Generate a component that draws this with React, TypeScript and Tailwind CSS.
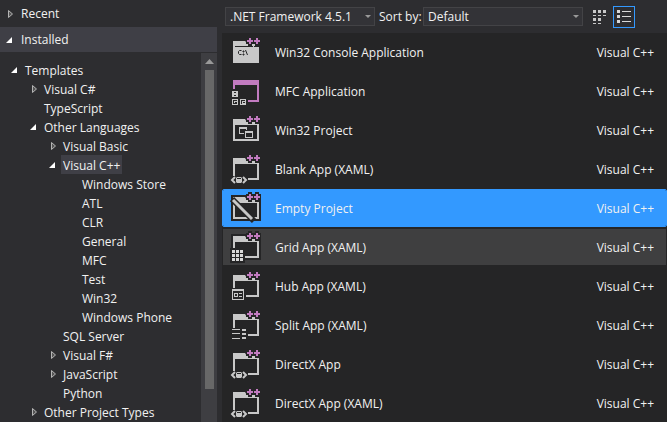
import { useState, type ReactNode } from "react";

type TreeItem = { label: string; level: number; state?: "open" | "closed" };

const TREE: TreeItem[] = [
  { label: "Templates", level: 0, state: "open" },
  { label: "Visual C#", level: 1, state: "closed" },
  { label: "TypeScript", level: 1 },
  { label: "Other Languages", level: 1, state: "open" },
  { label: "Visual Basic", level: 2, state: "closed" },
  { label: "Visual C++", level: 2, state: "open" },
  { label: "Windows Store", level: 3 },
  { label: "ATL", level: 3 },
  { label: "CLR", level: 3 },
  { label: "General", level: 3 },
  { label: "MFC", level: 3 },
  { label: "Test", level: 3 },
  { label: "Win32", level: 3 },
  { label: "Windows Phone", level: 3 },
  { label: "SQL Server", level: 2 },
  { label: "Visual F#", level: 2, state: "closed" },
  { label: "JavaScript", level: 2, state: "closed" },
  { label: "Python", level: 2 },
  { label: "Other Project Types", level: 1, state: "closed" },
];

const INDENT = ["pl-[9px]", "pl-[28px]", "pl-[47px]", "pl-[66px]"];

type IconKind = "console" | "mfc" | "win32" | "xaml" | "empty" | "grid" | "hub" | "split";

const PROJECTS: { name: string; icon: IconKind }[] = [
  { name: "Win32 Console Application", icon: "console" },
  { name: "MFC Application", icon: "mfc" },
  { name: "Win32 Project", icon: "win32" },
  { name: "Blank App (XAML)", icon: "xaml" },
  { name: "Empty Project", icon: "empty" },
  { name: "Grid App (XAML)", icon: "grid" },
  { name: "Hub App (XAML)", icon: "hub" },
  { name: "Split App (XAML)", icon: "split" },
  { name: "DirectX App", icon: "xaml" },
  { name: "DirectX App (XAML)", icon: "xaml" },
];

function Twisty({ state }: { state?: "open" | "closed" }) {
  return (
    <svg className="size-3 shrink-0" viewBox="0 0 12 12" aria-hidden="true">
      {state === "open" && <path d="M8 3v6H2z" fill="#fff" />}
      {state === "closed" && <path d="M4.5 2.5v7L8.5 6z" fill="#555" stroke="#b4b4b4" />}
    </svg>
  );
}

function Folder() {
  return (
    <>
      <path d="M1 4h15v3h15v23H1z" fill="#252526" />
      <path d="M3 6h12l2 3h12v19H3zM5 12v14h22V12z" fill="#c8c8c8" fillRule="evenodd" />
    </>
  );
}

function Pluses() {
  return (
    <>
      <path d="M18 1h4v2h3V1h4v2h2v6h-2v2h-4V9h-3v2h-4V9h-2V3h2z" fill="#252526" />
      <path d="M19 3h2v2h2v2h-2v2h-2V7h-2V5h2zM26 3h2v2h2v2h-2v2h-2V7h-2V5h2z" fill="#c27bc0" />
      <path d="M23 9h1v3h-1z" fill="#c8c8c8" />
    </>
  );
}

const DETAILS: Record<IconKind, ReactNode> = {
  console: (
    <>
      <path d="M3 6h12l2 3h12v19H3z" fill="#c8c8c8" />
      <path d="M5 11h24v1H5z" fill="#252526" />
      <path
        d="M11.5 15.5h-2l-1 1v2l1 1h2M13 16h1v1h-1zM13 19h1v1h-1zM15.5 15l2 5"
        fill="none"
        stroke="#252526"
      />
    </>
  ),
  mfc: (
    <>
      <path d="M3 6h26v22H18v-2h9V11H5v4H3z" fill="#c27bc0" />
      <path d="M2 17h6v6H2zM2 25h6v6H2zM10 25h6v6h-6z" fill="#c8c8c8" />
      <path d="M3 18h4v4H3zM3 26h4v4H3zM11 26h4v4h-4z" fill="#252526" />
      <path
        d="M3 18h1v1h2v-1h1v4H6v-1H4v1H3zM4 27h3v1H5v1H4zM12 27h3v1h-2v1h2v1h-3z"
        fill="#c8c8c8"
      />
    </>
  ),
  win32: (
    <>
      <path d="M9 14h8v7H9z" fill="#c8c8c8" />
      <path d="M10 16h6v4h-6zM14 17h9v8h-9z" fill="#252526" />
      <path d="M15 18h8v7h-8z" fill="#c8c8c8" />
      <path d="M16 20h6v4h-6z" fill="#252526" />
    </>
  ),
  xaml: (
    <>
      <path d="M1 24h17v8H1z" fill="#252526" />
      <path
        d="M5 25l-3 3 3 3M13 25l3 3-3 3"
        fill="none"
        stroke="#c8c8c8"
        strokeWidth="2"
      />
      <path d="M7 25h4l1 1v4l-1 1H7l-1-1v-4z" fill="#c8c8c8" />
      <path d="M7 26h4v1H7z" fill="#252526" />
    </>
  ),
  empty: (
    <>
      <path d="M2 8L24 30" stroke="#252526" strokeWidth="6" />
      <path d="M3 9L22 28" stroke="#c8c8c8" strokeWidth="3" />
    </>
  ),
  grid: (
    <>
      <path d="M0 18h15v15H0z" fill="#252526" />
      <path
        d="M2 20h3v3H2zM6 20h3v3H6zM10 20h3v3h-3zM2 24h3v3H2zM6 24h3v3H6zM10 24h3v3h-3zM2 28h3v3H2zM6 28h3v3H6zM10 28h3v3h-3z"
        fill="#d8d8d8"
      />
    </>
  ),
  hub: (
    <>
      <path d="M1 19h15v13H1z" fill="#252526" />
      <path d="M2 20h12v11H2zM3 22v8h10v-8z" fill="#c8c8c8" fillRule="evenodd" />
      <path d="M4 24h4v4H4zM5 25v2h2v-2z" fill="#c8c8c8" fillRule="evenodd" />
      <path d="M9 24h3v1H9zM9 27h3v1H9z" fill="#c8c8c8" />
    </>
  ),
  split: (
    <>
      <path d="M1 20h17v12H1z" fill="#252526" />
      <path
        d="M2 21h8v1H2zM2 25h8v1H2zM2 30h8v1H2zM12 21h4v2h-4zM12 25h4v2h-4zM12 29h4v2h-4z"
        fill="#c8c8c8"
      />
    </>
  ),
};

function ProjectIcon({ kind }: { kind: IconKind }) {
  return (
    <svg className="size-8 shrink-0" viewBox="0 1 32 32" aria-hidden="true">
      {kind !== "mfc" && <Folder />}
      {DETAILS[kind]}
      {kind !== "mfc" && <Pluses />}
    </svg>
  );
}

function Picker({ id, options, className }: { id: string; options: string[]; className: string }) {
  return (
    <div className={`relative ${className}`}>
      <select
        id={id}
        aria-label={id === "framework" ? "Target framework" : undefined}
        className="block h-[19px] w-full appearance-none border border-[#434346] bg-[#333337] pl-1 text-xs leading-4 text-[#f1f1f1]"
      >
        {options.map((o) => (
          <option key={o}>{o}</option>
        ))}
      </select>
      <svg className="pointer-events-none absolute top-2 right-1 h-1 w-[6px]" viewBox="0 0 6 4" aria-hidden="true">
        <path d="M0 0h6L3 3z" fill="#999" />
      </svg>
    </div>
  );
}

export default function App() {
  const [node, setNode] = useState("Visual C++");
  const [project, setProject] = useState("Empty Project");

  return (
    <div className="flex h-screen overflow-hidden bg-[#2d2d30] font-['Open_Sans','Noto_Sans',sans-serif] text-xs text-[#f1f1f1]">
      <aside className="mr-[5px] flex w-[217px] shrink-0 flex-col">
        <button className="flex h-[27px] shrink-0 items-center gap-[5px] pl-1 text-left">
          <Twisty state="closed" />
          Recent
        </button>
        <button className="flex h-[25px] shrink-0 items-center gap-[5px] bg-[#3f3f46] pl-1 text-left">
          <Twisty state="open" />
          Installed
        </button>
        <div className="mt-px flex min-h-0 flex-1">
          <ul className="min-w-0 flex-1 overflow-hidden pt-[7px]">
            {TREE.map((t) => (
              <li key={t.label}>
                <button
                  onClick={() => setNode(t.label)}
                  className={`flex h-[19px] w-full items-center gap-[2px] text-left whitespace-nowrap ${INDENT[t.level]}`}
                >
                  <Twisty state={t.state} />
                  <span className={`h-[19px] px-[2px] pt-px leading-[19px] ${t.label === node ? "bg-[#3f3f46]" : ""}`}>
                    {t.label}
                  </span>
                </button>
              </li>
            ))}
          </ul>
          <div className="flex w-4 flex-col items-center bg-[#3e3e42] pt-[6px]">
            <svg className="h-[5px] w-[9px] shrink-0" viewBox="0 0 9 5" aria-hidden="true">
              <path d="M4.500 0L9 5H0z" fill="#999" />
            </svg>
            <div className="mt-[6px] mb-[33px] w-[9px] flex-1 bg-[#686868]" />
          </div>
        </div>
      </aside>

      <main className="flex min-w-0 flex-1 flex-col">
        <div className="flex h-[33px] shrink-0 items-center pl-[3px]">
          <Picker id="framework" options={[".NET Framework 4.5.1"]} className="w-[150px]" />
          <label htmlFor="sort" className="w-12 shrink-0 pl-1 whitespace-nowrap">
            Sort by:
          </label>
          <Picker id="sort" options={["Default"]} className="w-[160px]" />
          <button aria-label="Small icons" className="ml-[6px] flex size-[22px] items-center justify-center">
            <svg className="size-[14px]" viewBox="0 0 14 14" aria-hidden="true">
              <path
                d="M0 0h3v3H0zM5 0h3v3H5zM10 0h3v3h-3zM0 5h3v1H0zM5 5h3v1H5zM10 5h3v1h-3zM0 8h3v3H0zM5 8h3v3H5zM0 13h3v1H0zM5 13h3v1H5z"
                fill="#c8c8c8"
              />
            </svg>
          </button>
          <button
            aria-label="Medium icons"
            className="ml-[2px] flex size-[22px] items-center justify-center border border-[#3399ff]"
          >
            <svg className="size-[14px]" viewBox="0 0 14 14" aria-hidden="true">
              <path
                d="M0 0h3v3H0zM0 5h3v3H0zM0 10h3v3H0zM5 1h9v1H5zM5 6h9v1H5zM5 11h9v1H5z"
                fill="#d8d8d8"
              />
            </svg>
          </button>
        </div>
        <ul className="min-h-0 flex-1 overflow-hidden bg-[#252526]">
          {PROJECTS.map((p) => (
            <li key={p.name} className="h-[39px]">
              <button
                onClick={() => setProject(p.name)}
                className={`flex h-[38px] w-full items-center border bg-clip-padding pr-3 pl-[7px] text-left ${
                  p.name === project
                    ? "rounded-xs border-[#3399ff] bg-[#3399ff]"
                    : p.icon === "grid"
                      ? "border-transparent bg-[#3f3f40]"
                      : "border-transparent"
                }`}
              >
                <ProjectIcon kind={p.icon} />
                <span className="ml-[13px] flex-1 pt-[2px]">{p.name}</span>
                <span className="pt-[2px]">Visual C++</span>
              </button>
            </li>
          ))}
        </ul>
      </main>
    </div>
  );
}
